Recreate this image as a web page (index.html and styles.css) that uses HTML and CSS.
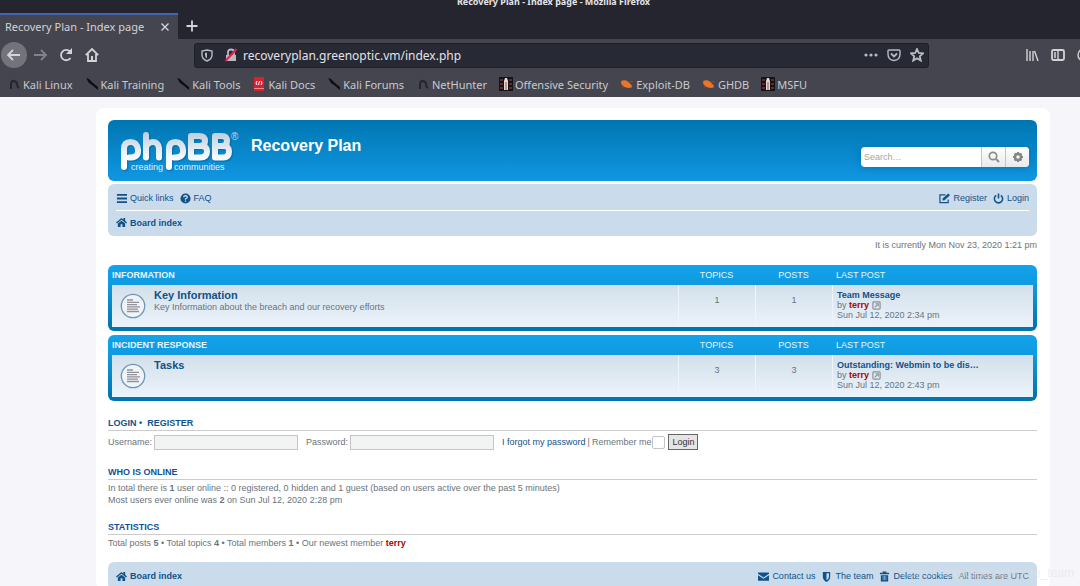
FILE: index.html
```html
<!DOCTYPE html>
<html lang="en">
<head>
<meta charset="utf-8">
<title>Recovery Plan - Index page</title>
<link rel="stylesheet" href="styles.css">
</head>
<body>
<svg class="defs" aria-hidden="true">
  <defs>
    <linearGradient id="silver" gradientUnits="userSpaceOnUse" x1="0" y1="2" x2="0" y2="38"><stop offset="0" stop-color="#b9cbdb"/><stop offset=".7" stop-color="#f4f8fb"/><stop offset="1" stop-color="#fff"/></linearGradient>
    <symbol id="dragon" viewBox="0 0 12 14"><path d="M3 12V7Q4 3 6 4Q9 5 9 7Q9 10 11 11" fill="none" stroke="#24252e" stroke-width="2"/></symbol>
    <symbol id="knife" viewBox="0 0 14 14"><path d="M1 1L4 2L8 6L13 10V13L7 8L4 6Z" fill="#0d0e14"/></symbol>
    <symbol id="docs" viewBox="0 0 12 14"><rect x="1" y="0" width="10" height="14" rx="1" fill="#d8202e"/><path d="M4 4L3 6L4 8M8 4L9 6L8 8M6.500 4L5.500 8" stroke="#fff" fill="none"/><path d="M1 11.500H11" stroke="#eb8a90"/></symbol>
    <symbol id="offsec" viewBox="0 0 14 14"><path d="M0 0H14V14H0Z" fill="#171216"/><path d="M1 3H4M1 7H4M1 11H4M10 3H13M10 7H13M10 11H13" stroke="#5f2c2c" stroke-width="2"/><path d="M6 1H8L9 4V13H5V4Z" fill="#e6d8d5"/><path d="M7 5V13" stroke="#7d5a55"/></symbol>
    <symbol id="bug" viewBox="0 0 12 12"><path d="M1 3.500Q4 2 7 4L10 7L10 9Q6 10 3 8L1 6Z" fill="#e8752a"/><path d="M8 4L11 4M3 8L2 9" stroke="#8c4a2a"/></symbol>
    <symbol id="house" viewBox="0 0 12 12"><path d="M0 6L6 1L8 3V1H10V4L12 6L11 7L6 3L1 7Z"/><path d="M2 7L6 4L10 7V11H7V8H5V11H2Z"/></symbol>
    <symbol id="topic" viewBox="0 0 26 26"><circle cx="13" cy="13" r="11.700" fill="#f0f3f7" stroke="#6f96b6" stroke-width="1.300"/><path d="M7 7H13M7 9.300H19M7 11.600H17M7 13.900H20M7 16.200H18M7 18.500H19" stroke="#8f9298" stroke-width="1.300"/></symbol>
    <symbol id="goto" viewBox="0 0 10 10"><rect x="1" y="1" width="8" height="8" rx="1" fill="none" stroke="#8b9196" stroke-width="1.300"/><path d="M3 7L6 4M4 3H7V6" fill="none" stroke="#8b9196" stroke-width="1.200"/></symbol>
  </defs>
</svg>

<header class="browser">
  <div class="titlebar">Recovery Plan - Index page - Mozilla Firefox</div>
  <div class="tabs">
    <div class="tab"><span>Recovery Plan - Index page</span>
      <button aria-label="Close tab"><svg width="10" height="10" viewBox="0 0 10 10"><path d="M1.500 1.500L8.500 8.500M8.500 1.500L1.500 8.500" class="thin"/></svg></button>
    </div>
    <button class="newtab" aria-label="New tab"><svg width="12" height="12" viewBox="0 0 12 12"><path d="M6 .5V11.500M.5 6H11.500" class="line"/></svg></button>
  </div>
  <div class="toolbar">
    <div class="nav">
      <button class="back" aria-label="Back"><svg width="16" height="16" viewBox="0 0 16 16"><path d="M14 8H2M7 3L2 8L7 13" class="line"/></svg></button>
      <button class="dim" aria-label="Forward"><svg width="16" height="16" viewBox="0 0 16 16"><path d="M2 8H14M9 3L14 8L9 13" class="line"/></svg></button>
      <button aria-label="Reload"><svg width="14" height="14" viewBox="0 0 14 14"><path d="M11.500 10A5.200 5.200 0 1 1 11 3.500" class="line"/><path d="M13 0V6H7Z" class="solid"/></svg></button>
      <button aria-label="Home"><svg width="14" height="14" viewBox="0 0 14 14"><path d="M.8 7.200L7 1L13.200 7.200M3 6V13H11V6" class="line"/><path d="M6 8H8V13H6Z" class="solid"/></svg></button>
    </div>
    <div class="urlbar">
      <svg width="12" height="13" viewBox="0 0 12 13"><path d="M6 1L11 2V6Q11 10 6 12Q1 10 1 6V2Z" class="thin"/><path d="M6 3.500V9.500Q4 8.500 4 6V4Z" class="solid"/></svg>
      <svg class="lock" width="14" height="14" viewBox="0 0 14 14"><path d="M2 7H12V13H2Z" class="solid"/><path d="M4 7V4Q4 1.500 7 1.500T10 4V7" class="line"/><path d="M1.500 13L12.500 1" stroke="#d7264c" stroke-width="2"/></svg>
      <input type="text" aria-label="Address" value="recoveryplan.greenoptic.vm/index.php">
      <button aria-label="Page actions"><svg width="14" height="14" viewBox="0 0 14 14"><circle cx="2" cy="7" r="1.600" class="solid"/><circle cx="7" cy="7" r="1.600" class="solid"/><circle cx="12" cy="7" r="1.600" class="solid"/></svg></button>
      <button aria-label="Save to Pocket"><svg width="14" height="14" viewBox="0 0 14 14"><path d="M2 2H12Q13 2 13 3V6Q13 12 7 12.500Q1 12 1 6V3Q1 2 2 2Z" class="thin"/><path d="M4 5.500L7 8.500L10 5.500" class="line"/></svg></button>
      <button aria-label="Bookmark"><svg width="14" height="14" viewBox="0 0 14 14"><path d="M7 1L8.800 5L13 5.400L9.800 8.200L10.800 12.600L7 10.300L3.200 12.600L4.200 8.200L1 5.400L5.200 5Z" class="line"/></svg></button>
    </div>
    <div class="tools">
      <button aria-label="Library"><svg width="14" height="14" viewBox="0 0 14 14"><path d="M2 1V13M5 3V13M8 3V13M9.500 3L13 13" class="thin"/></svg></button>
      <button aria-label="Sidebars"><svg width="14" height="14" viewBox="0 0 14 14"><rect x="1" y="2" width="12" height="10" rx="1.500" class="line"/><path d="M7 2V12M3 5H5M3 7H5M3 9H5" class="thin"/></svg></button>
      <button aria-label="Account"><svg width="14" height="14" viewBox="0 0 14 14"><circle cx="7" cy="7" r="6" class="thin"/></svg></button>
    </div>
  </div>
  <nav class="bookmarks">
    <a href="#"><svg><use href="#dragon"/></svg>Kali Linux</a>
    <a href="#"><svg><use href="#knife"/></svg>Kali Training</a>
    <a href="#"><svg><use href="#knife"/></svg>Kali Tools</a>
    <a href="#"><svg><use href="#docs"/></svg>Kali Docs</a>
    <a href="#"><svg><use href="#knife"/></svg>Kali Forums</a>
    <a href="#"><svg><use href="#dragon"/></svg>NetHunter</a>
    <a href="#"><svg><use href="#offsec"/></svg>Offensive Security</a>
    <a href="#"><svg><use href="#bug"/></svg>Exploit-DB</a>
    <a href="#"><svg><use href="#bug"/></svg>GHDB</a>
    <a href="#"><svg><use href="#offsec"/></svg>MSFU</a>
  </nav>
</header>

<div class="wrap">
  <div class="headerbar">
    <a class="logo" href="#" aria-label="phpBB creating communities">
      <svg width="124" height="46" viewBox="0 0 124 46">
        <g fill="none" stroke="#075f96" stroke-width="7" stroke-linecap="round" stroke-linejoin="round" opacity=".45" transform="translate(1 1)"><path id="word" d="M6 38V20Q6 13 12.500 13T20 20.500T13 28.500H11M28 6V28.500M28 18Q30 13 35 13T41 19V28.500M51 38V20Q51 13 57.500 13T65 20.500T58 28.500H56M73 7V28.500H82Q89 28.500 89 22.500T82 17H73M73 7H81Q87 7 87 12T81 17M97 7V28.500H105Q111 28.500 111 22.500T105 17H97M97 7H104Q109 7 109 12T104 17"/></g>
        <use href="#word" fill="none" stroke="url(#silver)" stroke-width="6" stroke-linecap="round" stroke-linejoin="round"/>
        <text x="113" y="11" class="reg">®</text>
        <text x="13" y="41" class="tagline">creating</text><text x="56" y="41" class="tagline">communities</text>
      </svg>
    </a>
    <h1>Recovery Plan</h1>
    <form class="search">
      <input type="search" placeholder="Search…" aria-label="Search">
      <button type="button" aria-label="Search"><svg width="12" height="12" viewBox="0 0 12 12"><circle cx="5" cy="5" r="3.700" fill="none" stroke="#8b8b8b" stroke-width="1.700"/><path d="M8 8L11 11" stroke="#8b8b8b" stroke-width="2"/></svg></button>
      <button type="button" aria-label="Advanced search"><svg width="12" height="12" viewBox="0 0 12 12"><circle cx="6" cy="6" r="3" fill="none" stroke="#858585" stroke-width="2.400"/><path d="M6 1V3M6 9V11M1 6H3M9 6H11M2.500 2.500L4 4M8 8L9.500 9.500M2.500 9.500L4 8M8 4L9.500 2.500" stroke="#858585" stroke-width="2"/></svg></button>
    </form>
  </div>

  <nav class="navbar">
    <div class="row links">
      <a href="#"><svg class="ic" viewBox="0 0 12 12"><path d="M1 1H12V3H1ZM1 5H12V7H1ZM1 9H12V11H1Z"/></svg>Quick links</a>
      <a href="#"><svg class="ic" viewBox="0 0 12 12"><circle cx="6" cy="6" r="5.500"/><path d="M4 4.500Q4 3 6 3T8 4.600Q8 5.500 6 6.300V7.300M6 8.300V9.600" fill="none" stroke="#cadceb" stroke-width="1.400"/></svg>FAQ</a>
      <a class="end" href="#"><svg class="ic" viewBox="0 0 12 12"><path d="M10 7V10.500H1V2H7" fill="none" stroke="#105289" stroke-width="1.300"/><path d="M4 6L10 .5L12 2.500L6 8L3.800 8.300Z"/></svg>Register</a>
      <a href="#"><svg class="ic" viewBox="0 0 12 12"><path d="M3.500 2.500A4.500 4.500 0 1 0 8.500 2.500M6 .5V6" fill="none" stroke="#105289" stroke-width="1.700"/></svg>Login</a>
    </div>
    <div class="row crumbs"><a href="#"><svg class="ic"><use href="#house"/></svg>Board index</a></div>
  </nav>
  <p class="time">It is currently Mon Nov 23, 2020 1:21 pm</p>

  <table class="forum">
    <colgroup><col class="c-icon"><col><col class="c-num"><col class="c-num"><col class="c-last"></colgroup>
    <thead><tr><th class="name" colspan="2">Information</th><th>Topics</th><th>Posts</th><th class="last">Last post</th></tr></thead>
    <tbody><tr>
      <td class="icon"><svg width="26" height="26"><use href="#topic"/></svg></td>
      <td class="name"><a href="#">Key Information</a><br>Key Information about the breach and our recovery efforts</td>
      <td class="num">1</td><td class="num">1</td>
      <td class="last"><a href="#">Team Message</a><br>by <a class="user" href="#">terry</a> <svg width="9" height="9"><use href="#goto"/></svg><br>Sun Jul 12, 2020 2:34 pm</td>
    </tr></tbody>
  </table>
  <table class="forum">
    <colgroup><col class="c-icon"><col><col class="c-num"><col class="c-num"><col class="c-last"></colgroup>
    <thead><tr><th class="name" colspan="2">Incident Response</th><th>Topics</th><th>Posts</th><th class="last">Last post</th></tr></thead>
    <tbody><tr>
      <td class="icon"><svg width="26" height="26"><use href="#topic"/></svg></td>
      <td class="name"><a href="#">Tasks</a></td>
      <td class="num">3</td><td class="num">3</td>
      <td class="last"><a href="#">Outstanding: Webmin to be dis…</a><br>by <a class="user" href="#">terry</a> <svg width="9" height="9"><use href="#goto"/></svg><br>Sun Jul 12, 2020 2:43 pm</td>
    </tr></tbody>
  </table>

  <h2 class="first"><a href="#">Login</a>&nbsp;•&nbsp; <a href="#">Register</a></h2>
  <form class="login">
    <label for="user">Username:</label><input type="text" id="user">
    <label class="pw" for="pass">Password:</label><input type="password" id="pass">
    <a href="#">I forgot my password</a><span class="bar">|</span><label for="remember">Remember me</label><input type="checkbox" id="remember">
    <button type="button">Login</button>
  </form>

  <h2>Who is online</h2>
  <p>In total there is <b>1</b> user online :: 0 registered, 0 hidden and 1 guest (based on users active over the past 5 minutes)<br>Most users ever online was <b>2</b> on Sun Jul 12, 2020 2:28 pm</p>

  <h2>Statistics</h2>
  <p>Total posts <b>5</b> • Total topics <b>4</b> • Total members <b>1</b> • Our newest member <a class="user" href="#">terry</a></p>

  <footer class="navbar footer">
    <div class="row links">
      <a class="strong" href="#"><svg class="ic"><use href="#house"/></svg>Board index</a>
      <a class="end" href="#"><svg class="ic" viewBox="0 0 12 12"><path d="M0 1.500H12V3L6 7L0 3Z"/><path d="M0 4.500L6 8.500L12 4.500V10.500H0Z"/></svg>Contact us</a>
      <a href="#"><svg class="ic" viewBox="0 0 12 12"><path d="M2 1H10V6Q10 10 6 12Q2 10 2 6Z"/><path d="M6 2.500H8.700V6Q8.700 8.500 6 10Z" fill="#cadceb"/></svg>The team</a>
      <a href="#"><svg class="ic" viewBox="0 0 12 12"><path d="M1 2H4V.5H8V2H11V3.500H1ZM2 4.500H10V11.500H2Z"/><path d="M4.500 5.500V10M6 5.500V10M7.500 5.500V10" stroke="#cadceb" stroke-width=".6"/></svg>Delete cookies</a>
      <span>All times are UTC</span>
    </div>
  </footer>
</div>
<div class="watermark">https://blog.csdn.net/m0re_team</div>
</body>
</html>
```
FILE: styles.css
```css
* { box-sizing: border-box; }
html { height: 100%; overflow: hidden; }
body {
  margin: 0;
  height: 100%;
  overflow: hidden;
  background: #f5f5fa;
  color: #6a747c;
  font: 9px/12px "Liberation Sans", Arial, sans-serif;
}
a { color: #105289; text-decoration: none; }
button, input { font: inherit; color: inherit; margin: 0; padding: 0; border: 0; background: none; }
h1, h2, p { margin: 0; }
svg { flex: none; }
.defs { position: absolute; width: 0; height: 0; }

/* Browser chrome */
.browser { background: #44454e; color: #d3d3d8; font: 11px/16px "Noto Sans", sans-serif; }
.browser button { display: flex; align-items: center; justify-content: center; }
.line { fill: none; stroke: currentColor; stroke-width: 1.8; }
.thin { fill: none; stroke: currentColor; stroke-width: 1.4; }
.solid { fill: currentColor; }
.titlebar {
  height: 13px;
  overflow: hidden;
  background: #24252e;
  color: #e4e4e8;
  font-weight: bold;
  font-size: 9px;
  line-height: 4px;
  text-align: center;
  padding-left: 27px;
}
.tabs { display: flex; background: #24252e; }
.tab {
  display: flex;
  align-items: center;
  justify-content: space-between;
  width: 178px;
  height: 26px;
  padding: 0 8px 0 5px;
  border-top: 2px solid #3f66b0;
  background: #44454e;
}
.newtab { width: 28px; }
.toolbar { display: flex; align-items: center; height: 32px; }
.nav { display: flex; align-items: center; width: 194px; padding-left: 1px; }
.nav button { width: 26px; height: 26px; }
.back.back { background: #73747b; border-radius: 50%; }
.dim { color: #81828a; }
.urlbar {
  display: flex;
  align-items: center;
  flex: 1;
  height: 25px;
  padding-left: 6px;
  background: #272935;
  border: 1px solid #1d1e27;
  border-radius: 3px;
  color: #b9b9c0;
}
.urlbar input { flex: 1; min-width: 0; height: 23px; margin-left: 5px; color: #e2e2e6; font-size: 12px; }
.urlbar button { width: 23px; }
.lock { margin-left: 11px; }
.tools { display: flex; gap: 12px; width: 151px; padding-left: 96px; overflow: hidden; }
.bookmarks { display: flex; height: 26px; padding-left: 7px; gap: 12px; line-height: 25px; white-space: nowrap; }
.bookmarks a { display: flex; align-items: center; gap: 2px; color: #c9c9ce; }
.bookmarks svg { width: 14px; height: 14px; }

/* Board */
.wrap { margin: 11px 30px 0 96px; padding: 12px 13px 0 12px; background: #fff; border-radius: 8px; }
.headerbar {
  display: flex;
  height: 61px;
  padding: 9px 8px 0 10px;
  border-radius: 6px;
  background: linear-gradient(#0076b1, #1097e2);
  color: #fff;
}
.logo { width: 133px; }
.tagline { fill: #e3f1fa; font-size: 9px; }
.reg { fill: #c3dcec; font-size: 10px; }
h1 { font-size: 16px; line-height: 33px; }
.search {
  display: flex;
  width: 168px;
  height: 20px;
  margin: 18px 0 0 auto;
  border-radius: 4px;
  background: #fff;
  overflow: hidden;
  box-shadow: 0 0 8px #0075b0;
}
.search input { flex: 1; min-width: 0; padding: 0 3px; }
.search input::placeholder { color: #a5a5a5; }
.search button { display: flex; align-items: center; justify-content: center; width: 24px; border-left: 1px solid #c7c3bf; background: linear-gradient(#fff, #e9e9e9); }
.navbar { margin-top: 3px; padding: 2px 8px; border-radius: 6px; background: #cadceb; }
.row { display: flex; align-items: center; height: 24px; }
.row a { display: flex; align-items: center; gap: 3px; }
.links { gap: 6px; }
.end { margin-left: auto; }
.crumbs { border-top: 1px solid #fff; font-weight: bold; }
.ic { width: 11px; height: 11px; fill: #105289; }
.time { margin: 3px 0 14px; text-align: right; }

.forum {
  width: 100%;
  margin-bottom: 4px;
  padding: 0 4px 4px;
  border-radius: 6px;
  border-spacing: 0;
  table-layout: fixed;
  background: linear-gradient(#12a3eb, #0f9ae0 20px, #0076b1 60px);
}
.c-icon { width: 42px; }
.c-num { width: 77px; }
.c-last { width: 201px; }
.forum th { height: 20px; padding: 0; color: #e6f5fd; font-weight: normal; text-transform: uppercase; }
.forum th.name { text-align: left; font-weight: bold; }
.forum th.last { text-align: left; padding-left: 4px; }
.forum td { height: 42px; padding: 5px 0 0; vertical-align: top; }
.forum tbody tr { background: linear-gradient(#d2e0eb, #ecf3fa); }
.forum td.icon { padding: 8px 0 0 8px; }
.forum td.name { line-height: 11px; }
.forum td.name a { font-size: 11px; font-weight: bold; }
.forum td.num { border-left: 1px solid #eef4f9; text-align: center; padding-top: 9px; }
.forum td.last { border-left: 1px solid #eef4f9; padding: 5px 0 0 4px; line-height: 10px; }
.forum td.last a { font-weight: bold; }
.forum td.last svg { vertical-align: -2px; }
a.user, .forum td.last a.user { color: #aa0000; font-weight: bold; }

h2 { margin: 14px 0 2px; border-bottom: 1px solid #ccc; color: #115098; font-size: 9px; line-height: 14px; text-transform: uppercase; }
h2.first { margin-top: 15px; }
.login { display: flex; align-items: center; height: 18px; }
.login input { width: 144px; height: 15px; margin-left: 2px; border: 1px solid #c7c3c7; background: #f2f3f3; }
.pw { margin-left: 8px; }
.login a { margin-left: 8px; }
.bar { margin: 0 2px; }
.login #remember { appearance: none; width: 13px; height: 13px; margin-left: 1px; border-radius: 2px; background: #fff; }
.login button { height: 16px; margin-left: 3px; padding: 0 3px; border: 1px solid #666; background: #e5e5e5; color: #333; }
.footer { margin-top: 13px; }
.strong { font-weight: bold; }
.watermark { position: absolute; right: 6px; bottom: 5px; color: rgba(225, 225, 232, .5); font-size: 12px; line-height: 16px; }
```
